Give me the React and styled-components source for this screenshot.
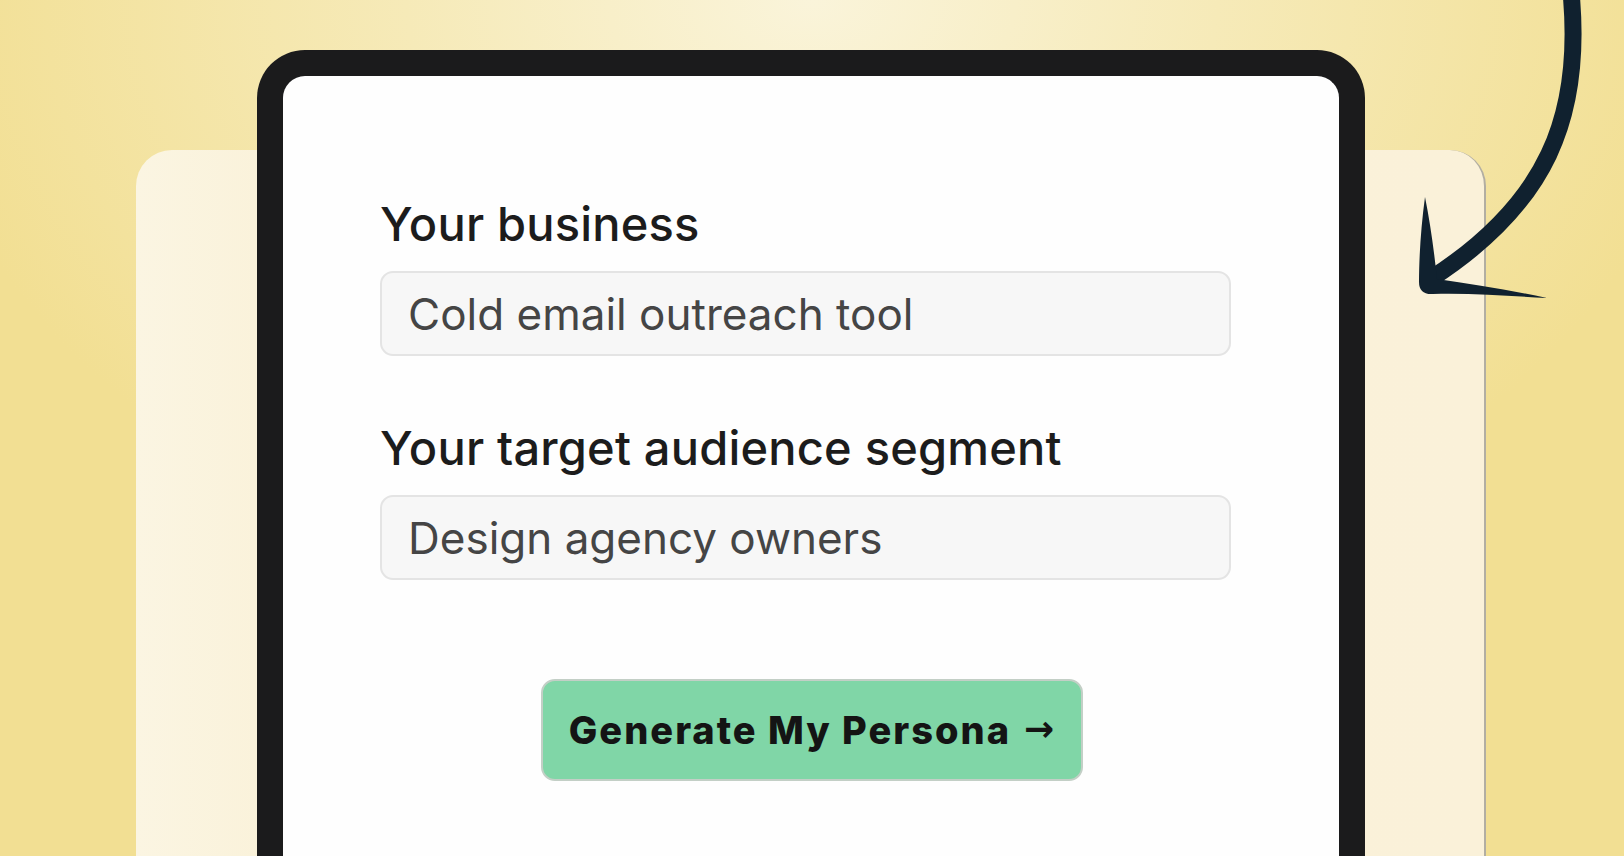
// Libs
import React from 'react';
import styled, { createGlobalStyle } from 'styled-components';

// Styles
const GlobalStyle = createGlobalStyle`
  html, body {
    margin: 0;
    padding: 0;
  }

  body {
    font-family: 'Inter', 'Lato', sans-serif;
  }
`;

const Page = styled.main`
  position: relative;
  width: 100%;
  height: 856px;
  overflow: hidden;
  background: radial-gradient(ellipse 900px 620px at 50% 0%, #faf4da 0%, #f6eab8 45%, #f2df93 100%);
`;

const Stage = styled.div`
  display: grid;
  width: 100%;
`;

const Backdrop = styled.div`
  grid-area: 1 / 1;
  justify-self: center;
  width: 1348px;
  height: 900px;
  margin-top: 150px;
  margin-left: -2px;
  border-radius: 36px;
  border-right: 2px solid #b2aea2;
  background: linear-gradient(90deg, #fbf5e2 0%, #faf2da 10%, #faf1d9 100%);
`;

const Device = styled.section`
  grid-area: 1 / 1;
  justify-self: center;
  box-sizing: border-box;
  width: 1108px;
  height: 900px;
  margin-top: 50px;
  margin-left: -2px;
  border: 26px solid #1b1b1c;
  border-bottom: none;
  border-radius: 48px 48px 0 0;
  background: #fefefe;
`;

const Form = styled.form`
  display: flex;
  flex-direction: column;
  width: 851px;
  padding: 120px 0 0 97px;
`;

const Field = styled.div`
  display: flex;
  flex-direction: column;
  gap: 19px;
  margin-bottom: ${({ $last }) => ($last ? '99px' : '64px')};
`;

const Label = styled.label`
  margin: 0;
  font: 500 47px 'Inter', sans-serif;
  line-height: 56px;
  color: #1c1c1c;
  letter-spacing: 0.2px;
`;

const Input = styled.input`
  box-sizing: border-box;
  width: 100%;
  height: 85px;
  padding: 0 26px;
  border: 2px solid #e4e4e4;
  border-radius: 13px;
  background: #f7f7f7;
  font: 400 44px 'Inter', sans-serif;
  letter-spacing: 0;
  color: #454545;
  outline: none;
`;

const Submit = styled.button`
  display: flex;
  align-items: center;
  justify-content: center;
  gap: 13px;
  align-self: center;
  box-sizing: border-box;
  width: 542px;
  height: 102px;
  margin-left: 12px;
  border: 2px solid #c3cfc6;
  border-radius: 14px;
  background: #80d6a7;
  font: 800 38px 'Inter', sans-serif;
  letter-spacing: 2px;
  color: #141414;
  cursor: pointer;
`;

const ArrowGlyph = styled.span`
  font: 700 36px 'DejaVu Sans', sans-serif;
  letter-spacing: 0;
  transform: translateY(-2px);
`;

const Arrow = styled.svg`
  position: absolute;
  top: 0;
  left: 1360px;
  width: 264px;
  height: 320px;
  pointer-events: none;
`;

const CurvedArrow = () => (
  <Arrow viewBox='0 0 264 320'>
    <path
      d='M211,-8 C223,118 186,204 72,278'
      fill='none'
      stroke='#10212f'
      strokeWidth='17'
      strokeLinecap='round'
    />
    <path
      d='M65,197 C61,226 59,258 59,282 Q59,295 73,294 C112,293 150,296 187,298 C150,290 112,284 77,279 C74,250 70,222 65,197 Z'
      fill='#10212f'
    />
  </Arrow>
);

const fields = [
  { id: 'business', label: 'Your business', value: 'Cold email outreach tool' },
  { id: 'audience', label: 'Your target audience segment', value: 'Design agency owners' },
];

const App = () => {
  return (
    <>
      <GlobalStyle />
      <Page>
        <Stage>
          <Backdrop />
          <Device>
            <Form onSubmit={(e) => e.preventDefault()}>
              {fields.map((field, index) => (
                <Field key={field.id} $last={index === fields.length - 1}>
                  <Label htmlFor={field.id}>{field.label}</Label>
                  <Input id={field.id} defaultValue={field.value} readOnly />
                </Field>
              ))}
              <Submit type='submit'>
                Generate My Persona
                <ArrowGlyph>→</ArrowGlyph>
              </Submit>
            </Form>
          </Device>
        </Stage>
        <CurvedArrow />
      </Page>
    </>
  );
};

export default App;
